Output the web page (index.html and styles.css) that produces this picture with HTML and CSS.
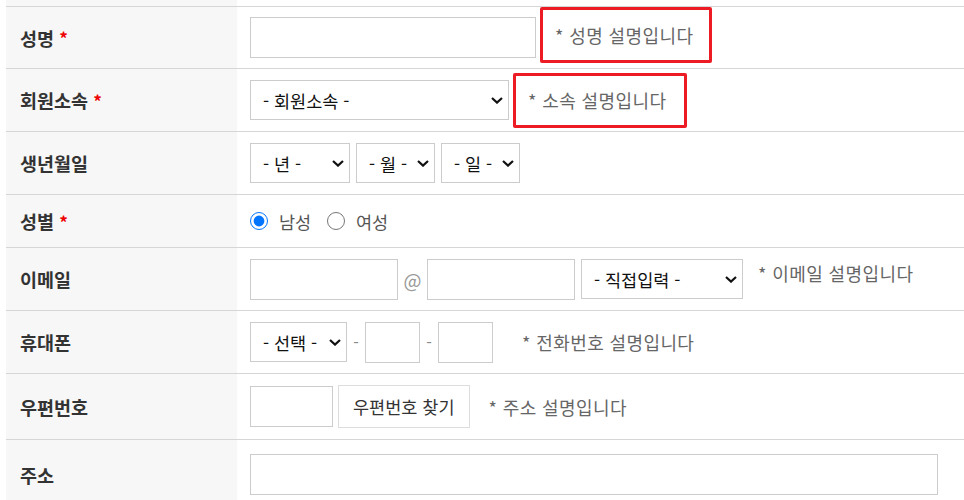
FILE: index.html
```html
<!DOCTYPE html>
<html lang="ko">
<head>
    <meta charset="utf-8">
    <title>회원가입</title>
    <link rel="stylesheet" href="styles.css">
</head>
<body>
    <div class="form-table">
        <div class="row row-top">
            <div class="label"></div>
            <div class="field"></div>
        </div>
        <div class="row row-name">
            <div class="label">성명 <span class="req">*</span></div>
            <div class="field">
                <input type="text" class="inp inp-name">
                <span class="desc boxed boxed-name">* 성명 설명입니다</span>
            </div>
        </div>
        <div class="row row-group">
            <div class="label">회원소속 <span class="req">*</span></div>
            <div class="field">
                <select class="sel sel-group">
                    <option>- 회원소속 -</option>
                </select>
                <span class="desc boxed boxed-group">* 소속 설명입니다</span>
            </div>
        </div>
        <div class="row row-birth">
            <div class="label">생년월일</div>
            <div class="field gap6">
                <select class="sel sel-year"><option>- 년 -</option></select>
                <select class="sel sel-md"><option>- 월 -</option></select>
                <select class="sel sel-md"><option>- 일 -</option></select>
            </div>
        </div>
        <div class="row row-gender">
            <div class="label">성별 <span class="req">*</span></div>
            <div class="field">
                <label class="radio"><input type="radio" name="gender" checked> 남성</label>
                <label class="radio"><input type="radio" name="gender"> 여성</label>
            </div>
        </div>
        <div class="row row-mail">
            <div class="label">이메일</div>
            <div class="field">
                <input type="text" class="inp inp-mail">
                <span class="at">@</span>
                <input type="text" class="inp inp-mail">
                <select class="sel sel-mail"><option>- 직접입력 -</option></select>
                <span class="desc desc-mail">* 이메일 설명입니다</span>
            </div>
        </div>
        <div class="row row-phone">
            <div class="label">휴대폰</div>
            <div class="field">
                <select class="sel sel-phone"><option>- 선택 -</option></select>
                <span class="dash">-</span>
                <input type="text" class="inp inp-phone">
                <span class="dash">-</span>
                <input type="text" class="inp inp-phone">
                <span class="desc desc-phone">* 전화번호 설명입니다</span>
            </div>
        </div>
        <div class="row row-zip">
            <div class="label">우편번호</div>
            <div class="field">
                <input type="text" class="inp inp-zip">
                <button type="button" class="btn">우편번호 찾기</button>
                <span class="desc desc-zip">* 주소 설명입니다</span>
            </div>
        </div>
        <div class="row row-addr">
            <div class="label">주소</div>
            <div class="field">
                <input type="text" class="inp inp-addr">
            </div>
        </div>
    </div>
</body>
</html>
```

FILE: styles.css
```css
html {
    font-family: "Noto Sans CJK KR", "Noto Sans", sans-serif;
}
body {
    margin: 0;
    padding-left: 6px;
    background-color: #fff;
    color: #333;
    overflow: hidden;
}
.form-table {
    width: 100%;
}
.row {
    display: flex;
    border-top: 1px solid #d6d6d6;
    box-sizing: border-box;
}
.row-top { height: 6px; border-top: none; }
.row-name { height: 62px; }
.row-group { height: 63px; }
.row-birth { height: 63px; }
.row-gender { height: 53px; }
.row-mail { height: 63px; }
.row-phone { height: 63px; }
.row-zip { height: 66px; }
.row-addr { height: 70px; }

.label {
    width: 231px;
    flex-shrink: 0;
    background-color: #f7f7f7;
    display: flex;
    align-items: center;
    padding-left: 14px;
    box-sizing: border-box;
    font-size: 18.5px;
    font-weight: bold;
    color: #333;
    white-space: pre;
}
.req {
    color: #e00;
    font-size: 17px;
}
.field {
    flex: 1;
    display: flex;
    align-items: center;
    padding-left: 13px;
}
.gap6 { gap: 6px; }

.inp, .sel, .btn {
    box-sizing: border-box;
    border: 1px solid #cccccc;
    border-radius: 0;
    background-color: #fff;
    font-family: inherit;
    font-size: 17.5px;
    color: #111;
    margin: 0;
    outline: none;
}
.inp { height: 41px; padding: 0 8px; }
.sel {
    height: 40px;
    padding: 0 24px 0 12px;
    appearance: none;
    -webkit-appearance: none;
    background-image: url("data:image/svg+xml;utf8,<svg xmlns='http://www.w3.org/2000/svg' width='12' height='7' viewBox='0 0 12 7'><path d='M1 1l5 4.6L11 1' fill='none' stroke='%23111' stroke-width='2.2'/></svg>");
    background-repeat: no-repeat;
    background-position: right 5px center;
    background-size: 12px 7px;
}
.btn {
    height: 43px;
    padding: 0 14px;
    border-color: #dddddd;
    color: #333;
    margin-left: 5px;
}

.inp-name { width: 286px; }
.sel-group { width: 259px; }
.sel-year { width: 100px; }
.sel-md { width: 79px; }
.inp-mail { width: 148px; }
.sel-mail { width: 162px; margin-left: 6px; }
.sel-phone { width: 97px; }
.inp-phone { width: 55px; }
.inp-zip { width: 83px; }
.inp-addr { width: 688px; }

.desc {
    font-size: 18px;
    letter-spacing: 0.4px;
    color: #666;
    line-height: 22px;
    white-space: pre;
}
.boxed {
    border: 3px solid #ed1c24;
    border-radius: 2px;
    padding: 0 12px;
    display: flex;
    align-items: center;
    box-sizing: border-box;
    margin-left: 4px;
}
.boxed-name { height: 56px; width: 172px; margin-top: -5px; }
.boxed-group { height: 55px; width: 174px; }
.desc-mail { margin-left: 15px; align-self: flex-start; margin-top: 14px; }
.desc-phone { margin-left: 29px; }
.desc-zip { margin-left: 19px; }

.at {
    color: #999;
    font-size: 19px;
    width: 29px;
    text-align: center;
}
.dash {
    color: #888;
    width: 18px;
    text-align: center;
}

.radio {
    display: flex;
    align-items: center;
    font-size: 17.5px;
    color: #555;
    margin-right: 16px;
    white-space: pre;
}
.radio input {
    width: 18px;
    height: 18px;
    margin: 0 6px 0 0;
}
```
